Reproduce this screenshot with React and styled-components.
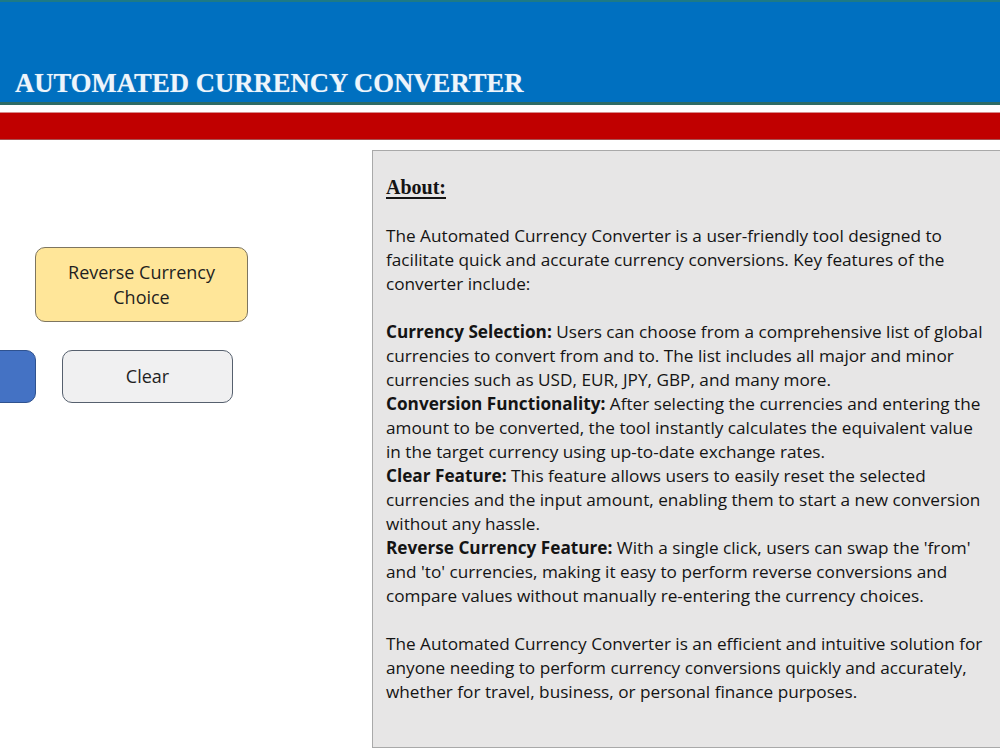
import React from 'react'
import styled, { createGlobalStyle } from 'styled-components'

const GlobalStyle = createGlobalStyle`
  html, body {
    margin: 0;
    padding: 0;
    background: #ffffff;
    overflow: hidden;
  }
  body {
    font-family: 'Open Sans', 'Liberation Sans', Arial, sans-serif;
  }
`

const Page = styled.div`
  width: 1000px;
  height: 750px;
  overflow: hidden;
  background: #ffffff;
`

const Banner = styled.header`
  height: 105px;
  box-sizing: border-box;
  background: #0070c0;
  border-top: 2px solid #1d7a86;
  border-bottom: 3px solid #2d6b66;
  display: flex;
  align-items: flex-end;
  padding: 0 0 5px 15px;
`

const Titulo = styled.h1`
  margin: 0;
  color: #eef5fb;
  font-family: 'Liberation Serif', 'Times New Roman', serif;
  font-weight: bold;
  font-size: 26.7px;
  line-height: 1;
  text-shadow: 0 0 1px rgba(255, 255, 255, 0.4);
`

const RedBand = styled.div`
  margin-top: 7px;
  height: 28px;
  background: #c00000;
  border-top: 1px solid #d88a8a;
  border-bottom: 1px solid #a85050;
  box-sizing: border-box;
`

const Main = styled.div`
  display: flex;
  align-items: flex-start;
`

const LeftColumn = styled.div`
  width: 372px;
  flex-shrink: 0;
  padding-top: 107px;
  display: flex;
  flex-direction: column;
  gap: 28px;
  overflow: hidden;
`

const ButtonRow = styled.div`
  display: flex;
  align-items: center;
  gap: ${p => p.$gap || 0}px;
  margin-left: ${p => p.$offset || 0}px;
`

const Botao = styled.button`
  width: ${p => p.$w}px;
  height: ${p => p.$h}px;
  flex-shrink: 0;
  box-sizing: border-box;
  border-radius: 10px;
  border: 1.5px solid ${p => p.$border};
  background: ${p => p.$bg};
  color: #1f1f1f;
  font-family: 'Open Sans', 'Liberation Sans', Arial, sans-serif;
  font-size: 18px;
  line-height: 25px;
  padding: 0 8px;
  text-align: center;
  cursor: pointer;
`

const Painel = styled.section`
  margin-top: 10px;
  width: 628px;
  height: 598px;
  box-sizing: border-box;
  background: #e7e6e6;
  border: 1px solid #a9a9a9;
  border-right: none;
  padding: 25px 0 0 13px;
  color: #141414;
`

const Sobre = styled.h2`
  margin: 0 0 25px;
  font-family: 'Liberation Serif', 'Times New Roman', serif;
  font-weight: bold;
  font-size: 20px;
  line-height: 23px;
  text-decoration: underline;
  text-underline-offset: 3px;
`

const Paragrafo = styled.p`
  margin: 0 0 24px;
  font-family: 'Open Sans', 'Liberation Sans', Arial, sans-serif;
  font-size: 17.2px;
  line-height: 24px;
  white-space: nowrap;
`

const Linha = styled.span`
  display: block;
`

const Destaque = styled.b`
  font-weight: bold;
`

const intro = [
  'The Automated Currency Converter is a user-friendly tool designed to',
  'facilitate quick and accurate currency conversions. Key features of the',
  'converter include:',
]

// each entry: [bold lead-in or null, rest of the line]
const recursos = [
  ['Currency Selection:', ' Users can choose from a comprehensive list of global'],
  [null, 'currencies to convert from and to. The list includes all major and minor'],
  [null, 'currencies such as USD, EUR, JPY, GBP, and many more.'],
  ['Conversion Functionality:', ' After selecting the currencies and entering the'],
  [null, 'amount to be converted, the tool instantly calculates the equivalent value'],
  [null, 'in the target currency using up-to-date exchange rates.'],
  ['Clear Feature:', ' This feature allows users to easily reset the selected'],
  [null, 'currencies and the input amount, enabling them to start a new conversion'],
  [null, 'without any hassle.'],
  ['Reverse Currency Feature:', " With a single click, users can swap the 'from'"],
  [null, "and 'to' currencies, making it easy to perform reverse conversions and"],
  [null, 'compare values without manually re-entering the currency choices.'],
]

const conclusao = [
  'The Automated Currency Converter is an efficient and intuitive solution for',
  'anyone needing to perform currency conversions quickly and accurately,',
  'whether for travel, business, or personal finance purposes.',
]

export default function App() {
  return (
    <Page>
      <GlobalStyle />
      <Banner>
        <Titulo>AUTOMATED CURRENCY CONVERTER</Titulo>
      </Banner>
      <RedBand />
      <Main>
        <LeftColumn>
          <ButtonRow $offset={35}>
            <Botao $w={213} $h={75} $bg="#ffe699" $border="#7d7560">
              Reverse Currency<br />Choice
            </Botao>
          </ButtonRow>
          <ButtonRow $offset={-64} $gap={26}>
            <Botao $w={100} $h={53} $bg="#4472c4" $border="#2f528f" aria-label="Convert" />
            <Botao $w={171} $h={53} $bg="#f0f0f1" $border="#56606e">
              Clear
            </Botao>
          </ButtonRow>
        </LeftColumn>
        <Painel>
          <Sobre>About:</Sobre>
          <Paragrafo>
            {intro.map(l => <Linha key={l}>{l}</Linha>)}
          </Paragrafo>
          <Paragrafo>
            {recursos.map(([negrito, resto]) => (
              <Linha key={resto}>
                {negrito && <Destaque>{negrito}</Destaque>}
                {resto}
              </Linha>
            ))}
          </Paragrafo>
          <Paragrafo>
            {conclusao.map(l => <Linha key={l}>{l}</Linha>)}
          </Paragrafo>
        </Painel>
      </Main>
    </Page>
  )
}
